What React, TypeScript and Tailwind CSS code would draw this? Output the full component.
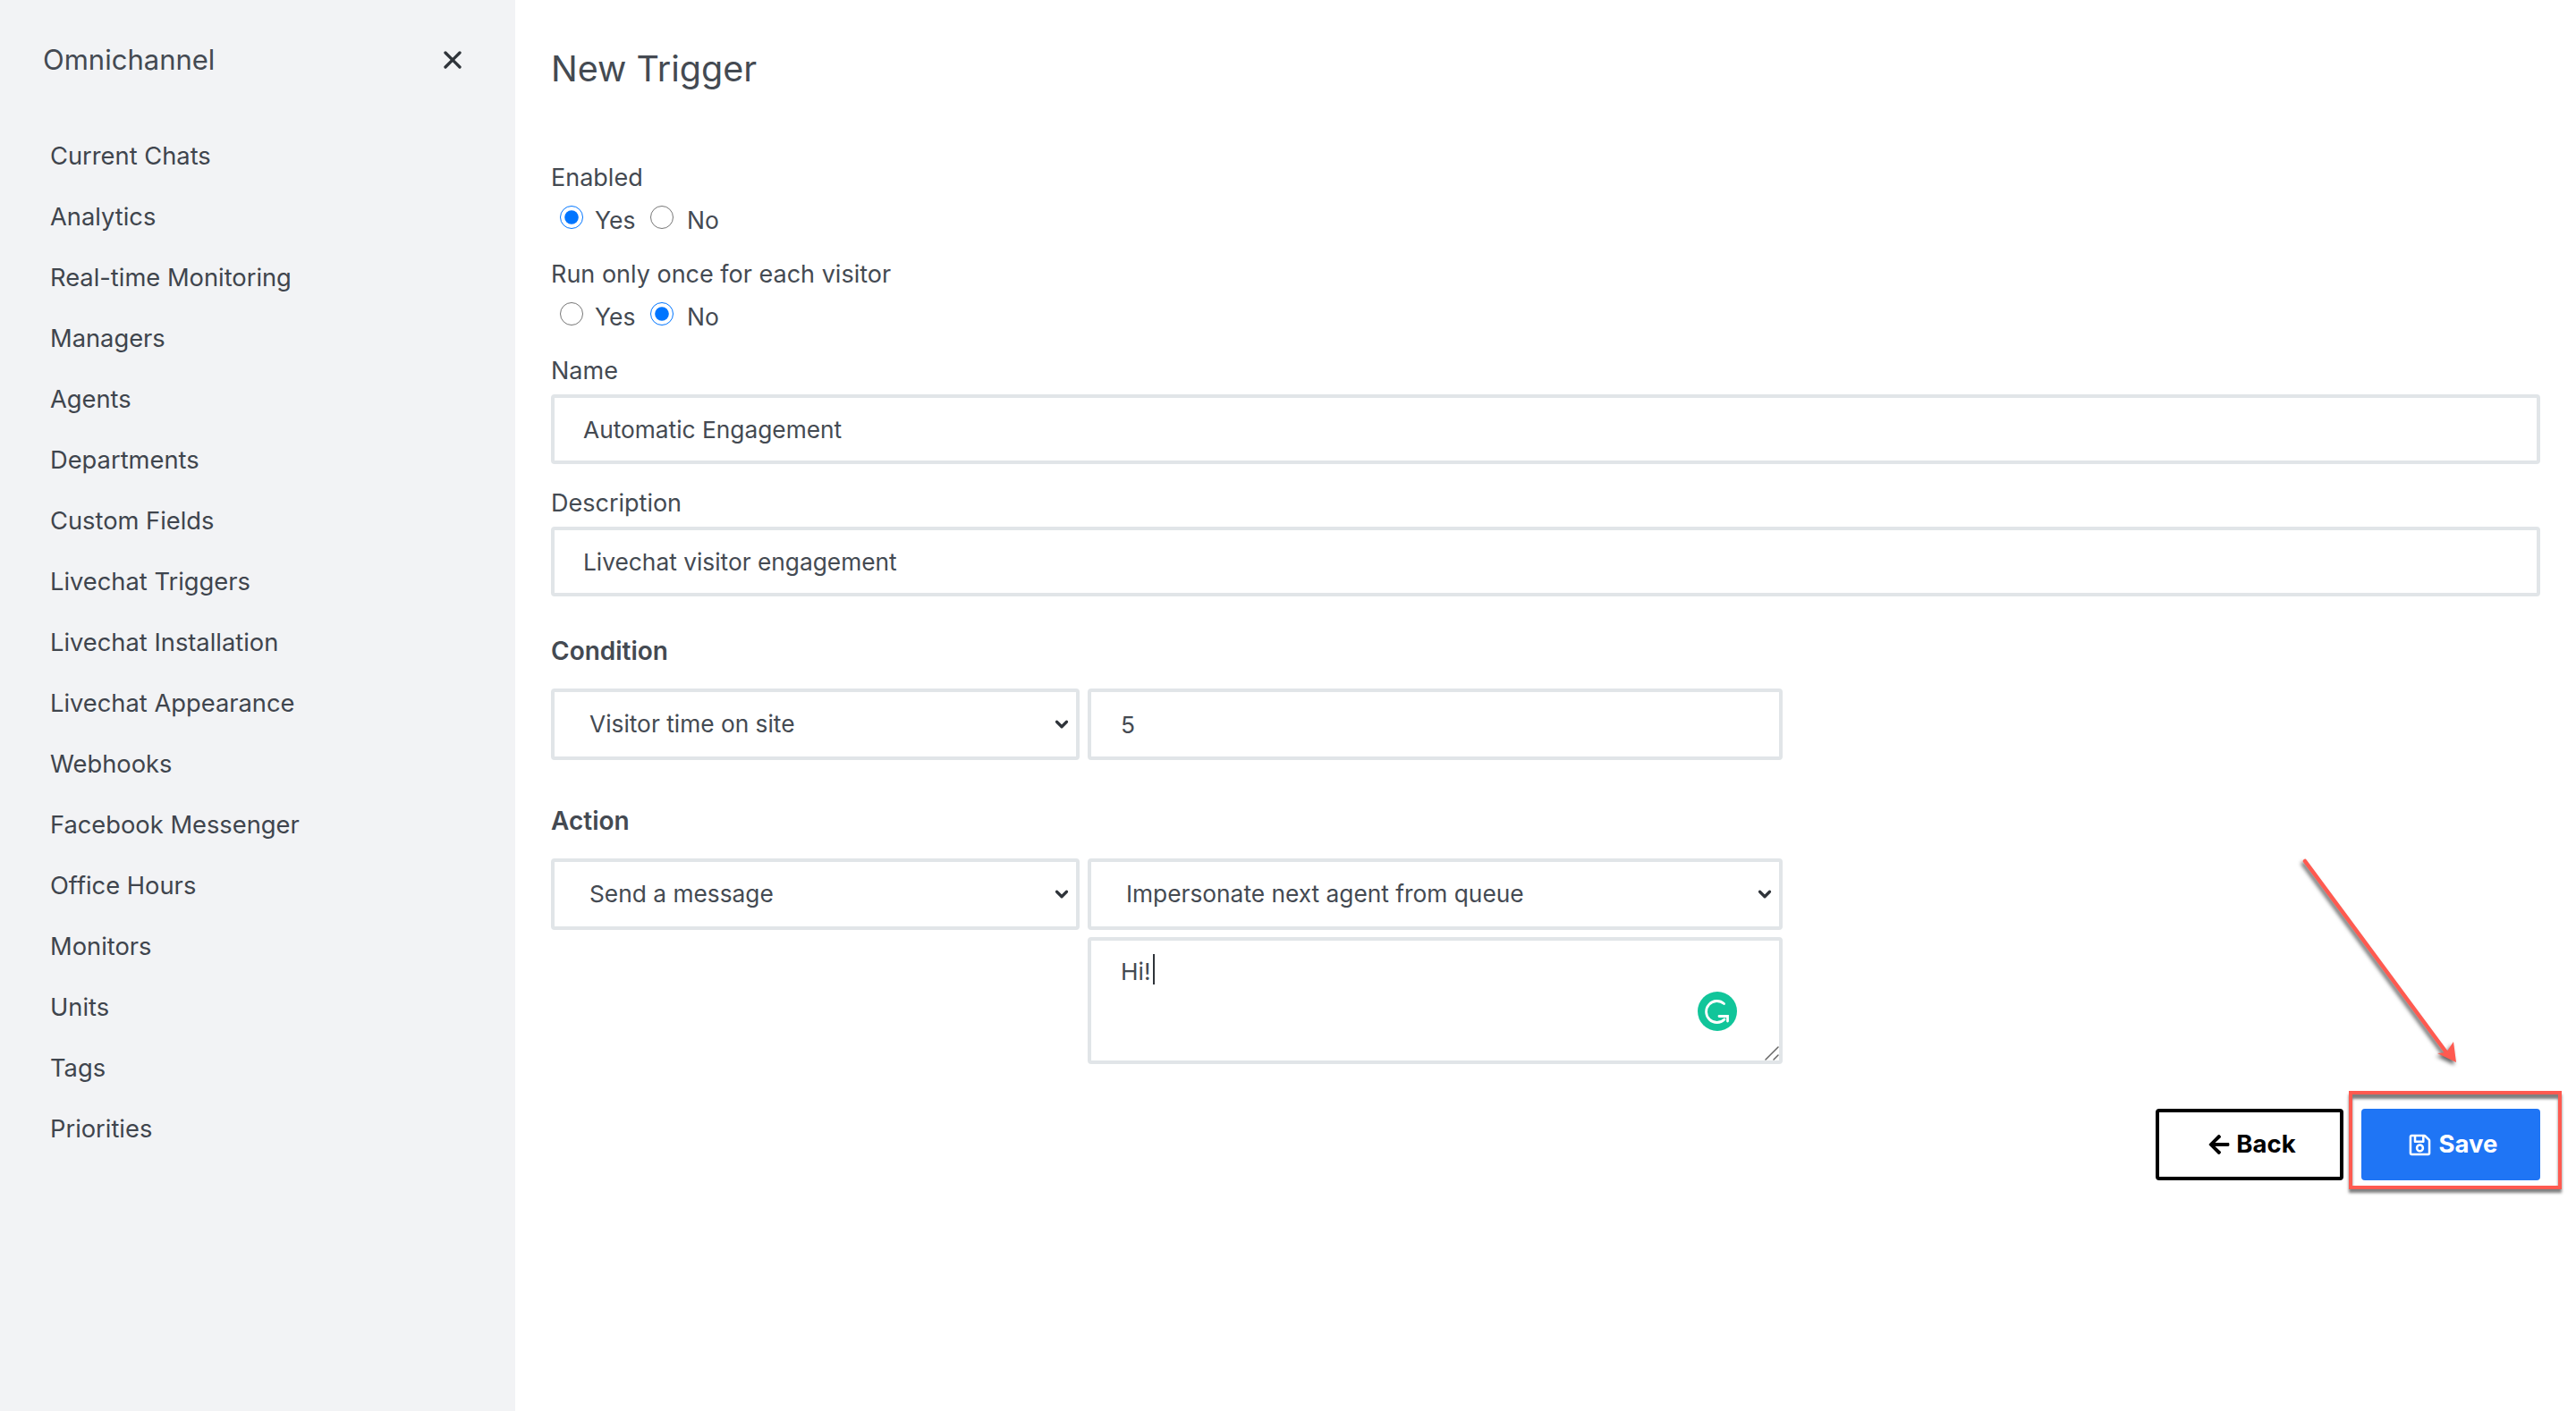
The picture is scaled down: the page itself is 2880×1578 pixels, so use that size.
import { ChevronDown, X } from 'lucide-react'
import { FaArrowLeft, FaRegSave } from 'react-icons/fa'

const navItems = [
  'Current Chats',
  'Analytics',
  'Real-time Monitoring',
  'Managers',
  'Agents',
  'Departments',
  'Custom Fields',
  'Livechat Triggers',
  'Livechat Installation',
  'Livechat Appearance',
  'Webhooks',
  'Facebook Messenger',
  'Office Hours',
  'Monitors',
  'Units',
  'Tags',
  'Priorities',
]

const fieldClass =
  'border-4 border-[#e1e5e8] rounded-[4px] bg-white text-[#444a52] text-[26.3px] outline-none'

function RadioRow({ name, checked }: { name: string; checked: 'yes' | 'no' }) {
  return (
    <div className="flex items-center h-[34px] pl-[10px] text-[26.5px]">
      <input
        type="radio"
        name={name}
        defaultChecked={checked === 'yes'}
        className="w-[26px] h-[26px] m-0 -mt-[9px] shrink-0 accent-[#0075ff]"
      />
      <span className="ml-[13px] w-[62px]">Yes</span>
      <input
        type="radio"
        name={name}
        defaultChecked={checked === 'no'}
        className="w-[26px] h-[26px] m-0 -mt-[9px] shrink-0 accent-[#0075ff]"
      />
      <span className="ml-[15px]">No</span>
    </div>
  )
}

function SelectBox({ value, className }: { value: string; className: string }) {
  return (
    <div className={`relative ${className}`}>
      <select className={`${fieldClass} appearance-none block w-full h-[80px] pl-[39px] pr-[30px]`}>
        <option>{value}</option>
      </select>
      <ChevronDown
        size={22}
        strokeWidth={3.5}
        className="absolute right-[9px] top-[29px] text-[#2f343a] pointer-events-none"
      />
    </div>
  )
}

export default function App() {
  return (
    <div className="relative flex h-[1578px] bg-white text-[#444a52] font-['Inter',sans-serif] overflow-hidden">
      <aside className="w-[576px] shrink-0 bg-[#f2f3f5]">
        <div className="flex items-center justify-between h-[44px] mt-[45px] pl-[48px] pr-[54px]">
          <span className="text-[31px] text-[#444a52]">Omnichannel</span>
          <X size={32} strokeWidth={2.5} className="text-[#2f343a]" />
        </div>
        <nav className="mt-[52px] flex flex-col">
          {navItems.map((item) => (
            <a key={item} className="flex items-center h-[68px] pl-[56px] text-[27.3px] text-[#3f454d]">
              {item}
            </a>
          ))}
        </nav>
      </aside>

      <main className="flex-1 min-w-0 pl-[40px] pr-[40px]">
        <h1 className="text-[39.5px] leading-[50px] mt-[52px] font-normal text-[#444a52]">New Trigger</h1>

        <div className="mt-[80px] leading-[34px] text-[27px]">Enabled</div>
        <div className="mt-[14px]">
          <RadioRow name="enabled" checked="yes" />
        </div>
        <div className="mt-[26px] leading-[34px] text-[27px]">Run only once for each visitor</div>
        <div className="mt-[14px]">
          <RadioRow name="once" checked="no" />
        </div>

        <div className="mt-[26px] leading-[34px] text-[27px]">Name</div>
        <input
          defaultValue="Automatic Engagement"
          className={`${fieldClass} block w-full h-[78px] mt-[9px] px-[32px]`}
        />
        <div className="mt-[27px] leading-[34px] text-[27px]">Description</div>
        <input
          defaultValue="Livechat visitor engagement"
          className={`${fieldClass} block w-full h-[78px] mt-[9px] px-[32px]`}
        />

        <div className="mt-[44px] leading-[34px] text-[28px] font-semibold">Condition</div>
        <div className="flex gap-[9px] mt-[25px]">
          <SelectBox value="Visitor time on site" className="w-[591px]" />
          <input defaultValue="5" className={`${fieldClass} w-[777px] h-[80px] px-[33px]`} />
        </div>

        <div className="mt-[51px] leading-[34px] text-[28px] font-semibold">Action</div>
        <div className="flex gap-[9px] mt-[25px]">
          <SelectBox value="Send a message" className="w-[591px]" />
          <div className="w-[777px]">
            <SelectBox value="Impersonate next agent from queue" className="w-full" />
            <div className="relative mt-[8px]">
              <textarea
                defaultValue="Hi!"
                className={`${fieldClass} block w-full h-[142px] px-[33px] py-[18px] leading-[34px] resize-none`}
              />
              <span className="absolute left-[73px] top-[19px] w-[2px] h-[34px] bg-[#2f343a]" />
              <svg viewBox="0 0 44 44" className="absolute left-[682px] top-[61px] w-[44px] h-[44px]">
                <circle cx="22" cy="22" r="22" fill="#11c59a" />
                <path
                  d="M29.5 13.5A12 12 0 1 0 30 31"
                  fill="none"
                  stroke="#fff"
                  strokeWidth="2.8"
                  strokeLinecap="round"
                />
                <path
                  d="M24 27.5H33.5V33"
                  fill="none"
                  stroke="#fff"
                  strokeWidth="2.8"
                  strokeLinecap="round"
                />
              </svg>
              <svg viewBox="0 0 16 16" className="absolute left-[757px] top-[122px] w-[16px] h-[16px]">
                <path d="M1 15L15 1M10 15L15 10" stroke="#666" strokeWidth="1.5" strokeLinecap="round" />
              </svg>
            </div>
          </div>
        </div>

        <div className="flex justify-end gap-[20px] mt-[50px]">
          <button className="flex items-center justify-center gap-[6px] w-[210px] h-[80px] pl-[5px] border-[4px] border-black rounded-[4px] bg-white text-black text-[27.5px] font-bold">
            <FaArrowLeft size={26} />
            Back
          </button>
          <button className="flex items-center justify-center gap-[8px] w-[200px] h-[80px] pl-[4px] rounded-[4px] bg-[#1f75f5] text-white text-[27.5px] font-bold">
            <FaRegSave size={27} />
            Save
          </button>
        </div>
      </main>

      {/* annotation drawn over the page */}
      <div className="absolute left-[2626px] top-[1220px] w-[238px] h-[110px] border-[4px] border-[#ff5a50] shadow-[0_4px_3px_rgba(0,0,0,0.5),inset_0_5px_3px_rgba(0,0,0,0.5)]" />
      <svg
        className="absolute left-[2560px] top-[950px] w-[210px] h-[250px] overflow-visible drop-shadow-[-2px_3px_2px_rgba(0,0,0,0.6)]"
        viewBox="0 0 210 250"
      >
        <path d="M17 13L175 227" stroke="#ff5a50" strokeWidth="4.5" strokeLinecap="round" />
        <path d="M186 238L165 228L175 227L183 215z" fill="#ff5a50" />
      </svg>
    </div>
  )
}
